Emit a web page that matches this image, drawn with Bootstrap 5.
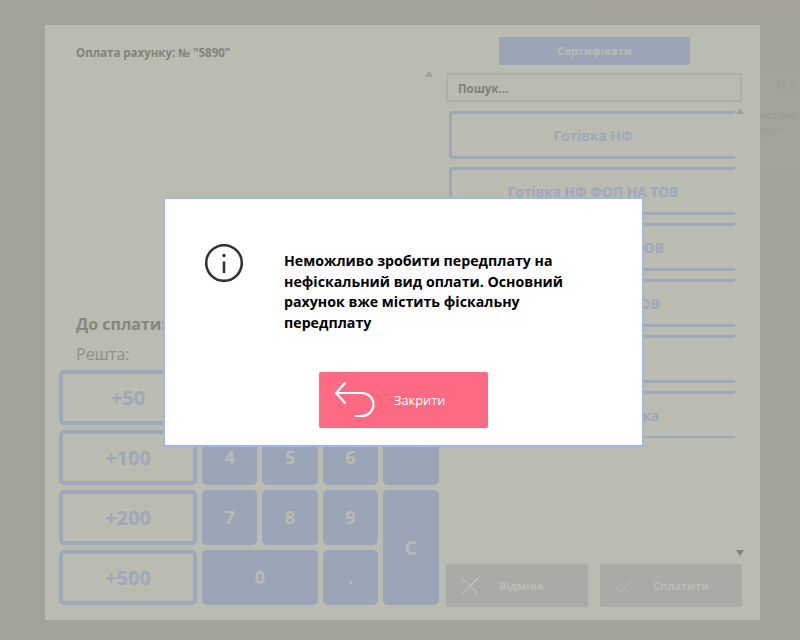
<!DOCTYPE html>
<html>
<head>
    <title>Оплата рахунку</title>
    <link href="https://cdn.jsdelivr.net/npm/bootstrap@5.3.0/dist/css/bootstrap.min.css" rel="stylesheet">
    <style>
        html, body { height: 100%; }
        body { background: #a1a398; font-family: "Open Sans", "Noto Sans", sans-serif; overflow: hidden; }
        .screen { width: 800px; height: 640px; padding: 25px 40px 20px 45px; }
        .pay-panel { width: 715px; height: 595px; background: #babbb1; padding: 12px 14px 13px 14px; }
        .back-strip { top: 0; right: 0; width: 210px; height: 8px; background: #a5a398; }
        .back-row { top: 70px; left: 760px; width: 40px; height: 105px; background: #a3a59a; color: #9c9e93; font-size: 11px; font-weight: 600; line-height: 15px; white-space: nowrap; }
        .back-row .sum { padding: 7px 0 0 15px; height: 37px; }
        .left-col { width: 379px; }
        .right-col { width: 299px; margin-left: 8px; }
        .bill-title { font-size: 11.5px; font-weight: 700; color: #82847c; padding-left: 17px; margin-top: 7px; }
        .up-mark { width: 0; height: 0; border-left: 4px solid transparent; border-right: 4px solid transparent; border-bottom: 6px solid #a0a198; }
        .down-mark { width: 0; height: 0; border-left: 4px solid transparent; border-right: 4px solid transparent; border-top: 6px solid #7f8078; }
        .list-up { margin: 10px 5px 0 0; }
        .scroll-up { margin-top: -3px; }
        .to-pay { font-size: 16px; font-weight: 700; color: #85877f; padding-left: 17px; line-height: 22px; }
        .change { font-size: 16px; color: #8f9188; padding-left: 17px; line-height: 22px; margin-top: 8px; }
        .keypad { display: grid; grid-template-columns: 138px repeat(4, 55.4px); grid-auto-rows: 55px; gap: 5px; margin: 5px 0 2px; }
        .quick { border: 4px solid #9fa8ba; border-radius: 5px; color: #9fa8ba; font-size: 20px; font-weight: 700; display: flex; align-items: center; justify-content: center; }
        .digit { background: #9ba5b7; border-radius: 5px; color: #b9bab0; font-size: 18px; font-weight: 700; display: flex; align-items: center; justify-content: center; }
        .span-two { grid-column: span 2; }
        .span-rows { grid-row: span 2; font-size: 20px; }
        .cert-btn { width: 191px; height: 28px; background: #9ba5b7; border-radius: 2px; color: #b9bab0; font-size: 11px; font-weight: 700; margin-left: 53px; padding-top: 1px; }
        .search-box { width: 296px; height: 29px; border: 2px solid #aeafa6; border-radius: 2px; font-size: 11.5px; font-weight: 700; color: #7f8179; margin-top: 8px; padding: 3px 0 0 10px; }
        .methods-wrap { margin-top: 9px; }
        .methods { width: 286px; height: 327px; margin-left: 3px; overflow: hidden; flex: none; }
        .method { width: 296px; height: 48px; flex: none; border: 3px solid #9fa8ba; border-radius: 4px; color: #9fa8ba; font-size: 13.7px; font-weight: 700; padding: 2px 8px 0 0; }
        .scroll-track { width: 10px; flex: none; }
        .actions { width: 296px; }
        .action { width: 142px; height: 43px; background: #a9aba6; border-radius: 2px; color: #bcbdb3; font-size: 11px; font-weight: 700; padding-left: 15px; }
        .action span { margin: 2px 0 0 20px; }
        .alert-box { top: 197px; left: 163px; width: 481px; height: 250px; background: #fff; border: 2px solid #a3b3ee; border-radius: 3px; }
        .alert-msg { width: 290px; margin: 8px 0 0 40px; font-size: 14.2px; line-height: 20.5px; font-weight: 700; color: #000; }
        .alert-body { padding: 44px 0 0 39px; height: 173px; }
        .close-btn { width: 169px; height: 56px; background: #fe6a84; border-radius: 2px; color: #fff; font-size: 12.8px; padding-left: 16px; }
        .close-btn span { margin: 2px 0 0 19px; }
    </style>
</head>
<body>
<div class="back-strip position-fixed"></div>
<div class="back-row position-fixed">
    <div class="sum">15,0</div>
    <div>встано</div>
    <div>рукт</div>
</div>

<div class="screen">
    <div class="pay-panel d-flex position-relative">
        <div class="left-col d-flex flex-column">
            <div class="bill-title">Оплата рахунку: № "5890"</div>
            <div class="d-flex justify-content-end flex-grow-1">
                <div class="up-mark list-up"></div>
            </div>
            <div class="to-pay">До сплати:</div>
            <div class="change">Решта:</div>
            <div class="keypad">
                <div class="quick">+50</div>
                <div class="digit">1</div>
                <div class="digit">2</div>
                <div class="digit">3</div>
                <div class="digit"></div>
                <div class="quick">+100</div>
                <div class="digit">4</div>
                <div class="digit">5</div>
                <div class="digit">6</div>
                <div class="digit"></div>
                <div class="quick">+200</div>
                <div class="digit">7</div>
                <div class="digit">8</div>
                <div class="digit">9</div>
                <div class="digit span-rows">C</div>
                <div class="quick">+500</div>
                <div class="digit span-two">0</div>
                <div class="digit">.</div>
            </div>
        </div>
        <div class="right-col d-flex flex-column">
            <div class="cert-btn d-flex align-items-center justify-content-center">Сертифікати</div>
            <div class="search-box d-flex align-items-center">Пошук...</div>
            <div class="methods-wrap d-flex flex-grow-1">
                <div class="methods d-flex flex-column gap-2">
                    <div class="method d-flex align-items-center justify-content-center">Готівка НФ</div>
                    <div class="method d-flex align-items-center justify-content-center">Готівка НФ ФОП НА ТОВ</div>
                    <div class="method d-flex align-items-center justify-content-center">Картка ФОП НА ТОВ</div>
                    <div class="method d-flex align-items-center justify-content-center">Карта ФОП НА ТОВ</div>
                    <div class="method d-flex align-items-center justify-content-center"></div>
                    <div class="method d-flex align-items-center justify-content-center">Банківська картка</div>
                </div>
                <div class="scroll-track d-flex flex-column align-items-center justify-content-between">
                    <div class="up-mark scroll-up"></div>
                    <div class="down-mark mb-2"></div>
                </div>
            </div>
            <div class="actions d-flex justify-content-between">
                <div class="action d-flex align-items-center">
                    <svg width="18" height="18" viewBox="0 0 18 18"><path d="M1 1 L17 17 M17 1 L1 17" stroke="#bcbdb3" stroke-width="1.6" fill="none"/></svg>
                    <span>Відміна</span>
                </div>
                <div class="action d-flex align-items-center">
                    <svg width="18" height="14" viewBox="0 0 18 14"><path d="M1 8 L6 13 L17 1" stroke="#bcbdb3" stroke-width="1" fill="none"/></svg>
                    <span>Сплатити</span>
                </div>
            </div>
        </div>
    </div>
</div>

<div class="alert-box position-fixed">
    <div class="alert-body d-flex">
        <svg class="flex-shrink-0" width="40" height="40" viewBox="0 0 40 40">
            <circle cx="20" cy="20" r="17.8" fill="none" stroke="#333" stroke-width="2.6"/>
            <circle cx="20" cy="12.5" r="1.7" fill="#333"/>
            <path d="M20 19.5 V29" stroke="#333" stroke-width="2.6" stroke-linecap="round" fill="none"/>
        </svg>
        <div class="alert-msg">Неможливо зробити передплату на нефіскальний вид оплати. Основний рахунок вже містить фіскальну передплату</div>
    </div>
    <div class="d-flex justify-content-center">
        <div class="close-btn d-flex align-items-center">
            <svg width="40" height="36" viewBox="0 0 40 36"><path d="M10 1 L1 11 L10 21 M1 11 H27 A11.5 11.5 0 0 1 27 34 H21" stroke="#fff" stroke-width="2.2" stroke-linecap="round" stroke-linejoin="round" fill="none"/></svg>
            <span>Закрити</span>
        </div>
    </div>
</div>

<script src="https://cdn.jsdelivr.net/npm/bootstrap@5.3.0/dist/js/bootstrap.bundle.min.js"></script>
</body>
</html>
